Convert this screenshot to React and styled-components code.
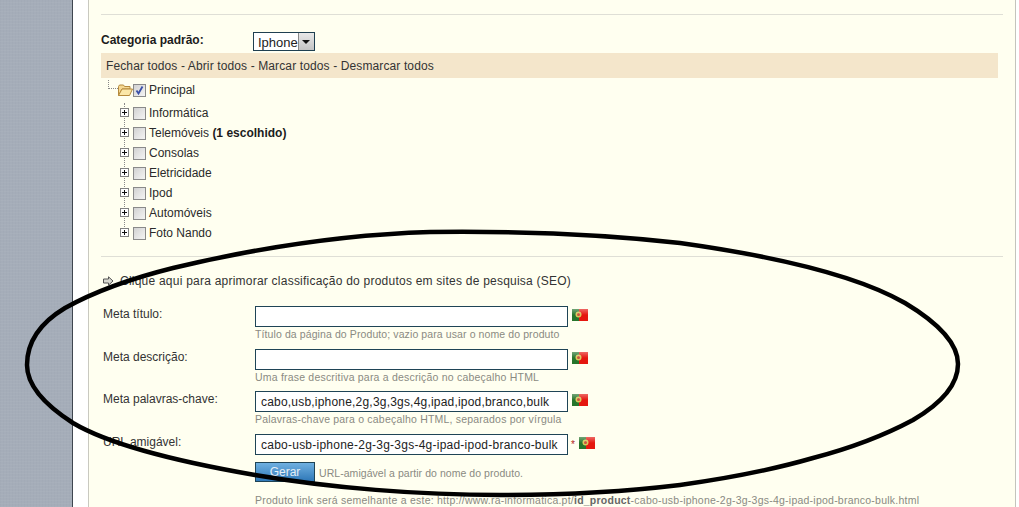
import React from "react"
import styled, { createGlobalStyle } from "styled-components"

const Global = createGlobalStyle`
  html, body { margin: 0; padding: 0; background: #fff; overflow: hidden; }
  body { font-family: "Liberation Sans", Arial, sans-serif; font-size: 12px; color: #222; }
`

const Page = styled.div`
  position: relative;
  display: flex;
  width: 1019px;
  height: 507px;
  overflow: hidden;
  background: #fff;
`

const Sidebar = styled.div`
  width: 72px;
  flex: none;
  border-right: 1px solid #3f4650;
  background-color: #a5adb9;
  background-image:
    repeating-linear-gradient(0deg, rgba(255,255,255,.035) 0 1px, transparent 1px 3px),
    repeating-linear-gradient(90deg, rgba(60,70,85,.025) 0 1px, transparent 1px 3px);
`

const Gutter = styled.div`
  width: 15px;
  flex: none;
`

const Panel = styled.div`
  width: 928px;
  flex: none;
  box-sizing: border-box;
  padding: 14px 12px 0 12px;
  background: #fffff0;
  border-left: 1px solid #c9c9c0;
  border-right: 1px solid #c4c4bc;
`

const Rule = styled.div`
  height: 1px;
  background: #dfdfd6;
`

const CategoryRow = styled.div`
  display: flex;
  align-items: flex-start;
  height: 21px;
  margin-top: 17px;
`

const CategoryLabel = styled.label`
  width: 152px;
  flex: none;
  padding-top: 1px;
  font-weight: bold;
  color: #1c1c1c;
`

const Select = styled.div`
  display: flex;
  align-items: stretch;
  box-sizing: border-box;
  width: 62px;
  height: 19px;
  border: 1px solid #1f3f50;
  background: #fff;
  font-size: 13px;
  line-height: 19px;
  padding-left: 4px;
  justify-content: space-between;
  color: #222;
`

const SelectArrow = styled.span`
  width: 16px;
  background: linear-gradient(#e8e8e8, #c4c4c4);
  border-left: 1px solid #888;
  display: flex;
  align-items: center;
  justify-content: center;
  &::after {
    content: "";
    border: 4px solid transparent;
    border-top: 4px solid #111;
    border-bottom: 0;
  }
`

const ActionBar = styled.div`
  width: 897px;
  height: 25px;
  box-sizing: border-box;
  padding-left: 5px;
  background: #f4e6cb;
  line-height: 26px;
  letter-spacing: 0.12px;
  color: #333;
`

const Tree = styled.div`
  position: relative;
  padding-top: 2px;
  height: 176px;
  &::before {
    content: "";
    position: absolute;
    left: 23px;
    top: 25px;
    height: 128px;
    border-left: 1px dotted #888;
  }
`

const RootRow = styled.div`
  position: relative;
  display: flex;
  align-items: center;
  height: 20px;
  margin-bottom: 3px;
  padding-left: 17px;
  &::before {
    content: "";
    position: absolute;
    left: 7px;
    top: 0;
    width: 9px;
    height: 8px;
    border-left: 1px dotted #888;
    border-bottom: 1px dotted #888;
  }
`

const ChildRow = styled.div`
  position: relative;
  display: flex;
  align-items: center;
  height: 20px;
  padding-left: 19px;
`

const PlusBox = styled.span`
  position: relative;
  width: 9px;
  height: 9px;
  box-sizing: border-box;
  flex: none;
  border: 1px solid #808080;
  background: #fff;
  margin-right: 4px;
  margin-top: -2px;
  &::before { content: ""; position: absolute; left: 1px; top: 3px; width: 5px; height: 1px; background: #111; }
  &::after { content: ""; position: absolute; left: 3px; top: 1px; width: 1px; height: 5px; background: #111; }
`

const CheckBox = styled.span`
  width: 13px;
  height: 13px;
  flex: none;
  box-sizing: border-box;
  border: 1px solid #8a8a8a;
  background: linear-gradient(135deg, #d2d2d2, #f4f4f4);
  margin-right: 3px;
  display: flex;
  align-items: center;
  justify-content: center;
`

const NodeText = styled.span`
  color: #2a2a2a;
  b { color: #1c1c1c; }
`

const SeoLink = styled.div`
  display: flex;
  align-items: center;
  gap: 6px;
  height: 16px;
  margin: 16px 0 0 2px;
  letter-spacing: 0.23px;
  color: #333;
`

const FieldRow = styled.div`
  display: grid;
  grid-template-columns: 152px auto;
  margin-left: 2px;
  margin-top: ${p => p.$top}px;
`

const FieldLabel = styled.label`
  padding-top: 1px;
  color: #333;
`

const FieldMain = styled.div`
  display: flex;
  flex-direction: column;
`

const InputLine = styled.div`
  display: flex;
  align-items: center;
`

const TextInput = styled.div`
  width: 313px;
  height: 21px;
  box-sizing: border-box;
  border: 1px solid #1f4456;
  background: #fff;
  padding-left: 5px;
  font-size: 12px;
  line-height: 20px;
  letter-spacing: ${p => p.$spacing ?? 0.2}px;
  color: #222;
  white-space: nowrap;
`

const Required = styled.span`
  color: #b02020;
  margin-left: 3px;
  font-size: 10px;
  line-height: 10px;
`

const Flag = styled.svg`
  width: 16px;
  height: 12px;
  flex: none;
  margin-left: ${p => p.$left || 4}px;
  margin-top: -3px;
`

const Hint = styled.div`
  font-size: 10.5px;
  line-height: 12px;
  margin-top: 1px;
  color: #8a8a82;
  letter-spacing: ${p => p.$spacing ?? 0.2}px;
  white-space: nowrap;
  b { color: #666; }
`

const ButtonLine = styled.div`
  display: flex;
  align-items: center;
  gap: 4px;
  margin-top: 7px;
`

const Button = styled.div`
  width: 60px;
  height: 20px;
  box-sizing: border-box;
  border: 1px solid #1f4456;
  background: linear-gradient(#6fb0e0, #2f78b8);
  color: #e4eef6;
  font-size: 12px;
  line-height: 18px;
  text-align: center;
`

const LinkHint = styled(Hint)`
  margin-top: 12px;
`

const Scribble = styled.svg`
  position: absolute;
  left: 0;
  top: 0;
  width: 1019px;
  height: 507px;
  pointer-events: none;
`

function PtFlag({ left }) {
  return (
    <Flag $left={left} viewBox="0 0 16 12">
      <defs>
        <linearGradient id="ptGloss" x1="0" y1="0" x2="0" y2="1">
          <stop offset="0" stopColor="#fff" stopOpacity=".35" />
          <stop offset=".5" stopColor="#fff" stopOpacity="0" />
        </linearGradient>
      </defs>
      <rect width="16" height="12" fill="#e5170f" />
      <rect width="7" height="12" fill="#27752c" />
      <circle cx="6.5" cy="5.5" r="3" fill="#d8c85a" />
      <circle cx="6.5" cy="5.5" r="1.5" fill="#c9503a" />
      <rect width="16" height="12" fill="url(#ptGloss)" />
    </Flag>
  )
}

function Folder() {
  return (
    <svg width="15" height="13" viewBox="0 0 15 13" style={{ flex: "none" }}>
      <path d="M0.5 2.5 L1.5 1 H5.5 L6.5 2.5 H12 V5 H4 L0.5 11.5 Z" fill="#f5d890" stroke="#b58a3c" />
      <path d="M4 5 H14.5 L11.5 11.5 H0.5 Z" fill="#fbe7a8" stroke="#b58a3c" />
    </svg>
  )
}

function Check() {
  return (
    <svg width="9" height="9" viewBox="0 0 9 9">
      <path d="M1.5 4.5 L3.5 7.5 L7.5 0.5" fill="none" stroke="#3a50a8" strokeWidth="1.8" />
    </svg>
  )
}

function Arrow() {
  return (
    <svg width="11" height="10" viewBox="0 0 11 10" style={{ flex: "none" }}>
      <path d="M0.5 3 H5.5 V0.8 L10 5 L5.5 9.2 V7 H0.5 Z" fill="#d8d8d0" stroke="#555" />
    </svg>
  )
}

const categories = [
  ["Informática"],
  ["Telemóveis", "(1 escolhido)"],
  ["Consolas"],
  ["Eletricidade"],
  ["Ipod"],
  ["Automóveis"],
  ["Foto Nando"],
]

export default function App() {
  return (
    <Page>
      <Global />
      <Sidebar />
      <Gutter />
      <Panel>
        <Rule />
        <CategoryRow>
          <CategoryLabel>Categoria padrão:</CategoryLabel>
          <Select>
            Iphone
            <SelectArrow />
          </Select>
        </CategoryRow>
        <ActionBar>Fechar todos - Abrir todos - Marcar todos - Desmarcar todos</ActionBar>
        <Tree>
          <RootRow>
            <Folder />
            <CheckBox><Check /></CheckBox>
            <NodeText>Principal</NodeText>
          </RootRow>
          {categories.map(([name, extra]) => (
            <ChildRow key={name}>
              <PlusBox />
              <CheckBox />
              <NodeText>
                {name} {extra && <b>{extra}</b>}
              </NodeText>
            </ChildRow>
          ))}
        </Tree>
        <Rule />
        <SeoLink>
          <Arrow />
          Clique aqui para aprimorar classificação do produtos em sites de pesquisa (SEO)
        </SeoLink>
        <FieldRow $top={17}>
          <FieldLabel>Meta título:</FieldLabel>
          <FieldMain>
            <InputLine><TextInput /><PtFlag /></InputLine>
            <Hint $spacing={0.1}>Título da página do Produto; vazio para usar o nome do produto</Hint>
          </FieldMain>
        </FieldRow>
        <FieldRow $top={9}>
          <FieldLabel>Meta descrição:</FieldLabel>
          <FieldMain>
            <InputLine><TextInput /><PtFlag /></InputLine>
            <Hint>Uma frase descritiva para a descrição no cabeçalho HTML</Hint>
          </FieldMain>
        </FieldRow>
        <FieldRow $top={8}>
          <FieldLabel>Meta palavras-chave:</FieldLabel>
          <FieldMain>
            <InputLine>
              <TextInput>cabo,usb,iphone,2g,3g,3gs,4g,ipad,ipod,branco,bulk</TextInput>
              <PtFlag />
            </InputLine>
            <Hint>Palavras-chave para o cabeçalho HTML, separados por vírgula</Hint>
          </FieldMain>
        </FieldRow>
        <FieldRow $top={9}>
          <FieldLabel>URL amigável:</FieldLabel>
          <FieldMain>
            <InputLine>
              <TextInput $spacing={0.24}>cabo-usb-iphone-2g-3g-3gs-4g-ipad-ipod-branco-bulk</TextInput>
              <Required>*</Required>
              <PtFlag />
            </InputLine>
            <ButtonLine>
              <Button>Gerar</Button>
              <Hint $spacing={0.05}>URL-amigável a partir do nome do produto.</Hint>
            </ButtonLine>
            <LinkHint $spacing={0.235}>
              Produto link será semelhante a este: http://www.ra-informatica.pt/<b>id_product</b>-cabo-usb-iphone-2g-3g-3gs-4g-ipad-ipod-branco-bulk.html
            </LinkHint>
          </FieldMain>
        </FieldRow>
      </Panel>
      <Scribble viewBox="0 0 1019 507">
        <path
          d="M958 364 C958 344 940 324 905 303 C860 277 780 257 680 243 C600 234 510 231 430 232 C330 235 240 252 173 268 C125 280 90 294 65 308 C40 323 27 343 27 365 C27 385 45 405 73 423 C110 445 180 462 255 475 C330 488 420 495 500 495 C570 495 630 491 680 485 C730 478 775 469 813 458 C855 447 885 435 913 420 C942 403 958 384 958 364 Z"
          fill="none"
          stroke="#000"
          strokeWidth="4.5"
        />
      </Scribble>
    </Page>
  )
}
